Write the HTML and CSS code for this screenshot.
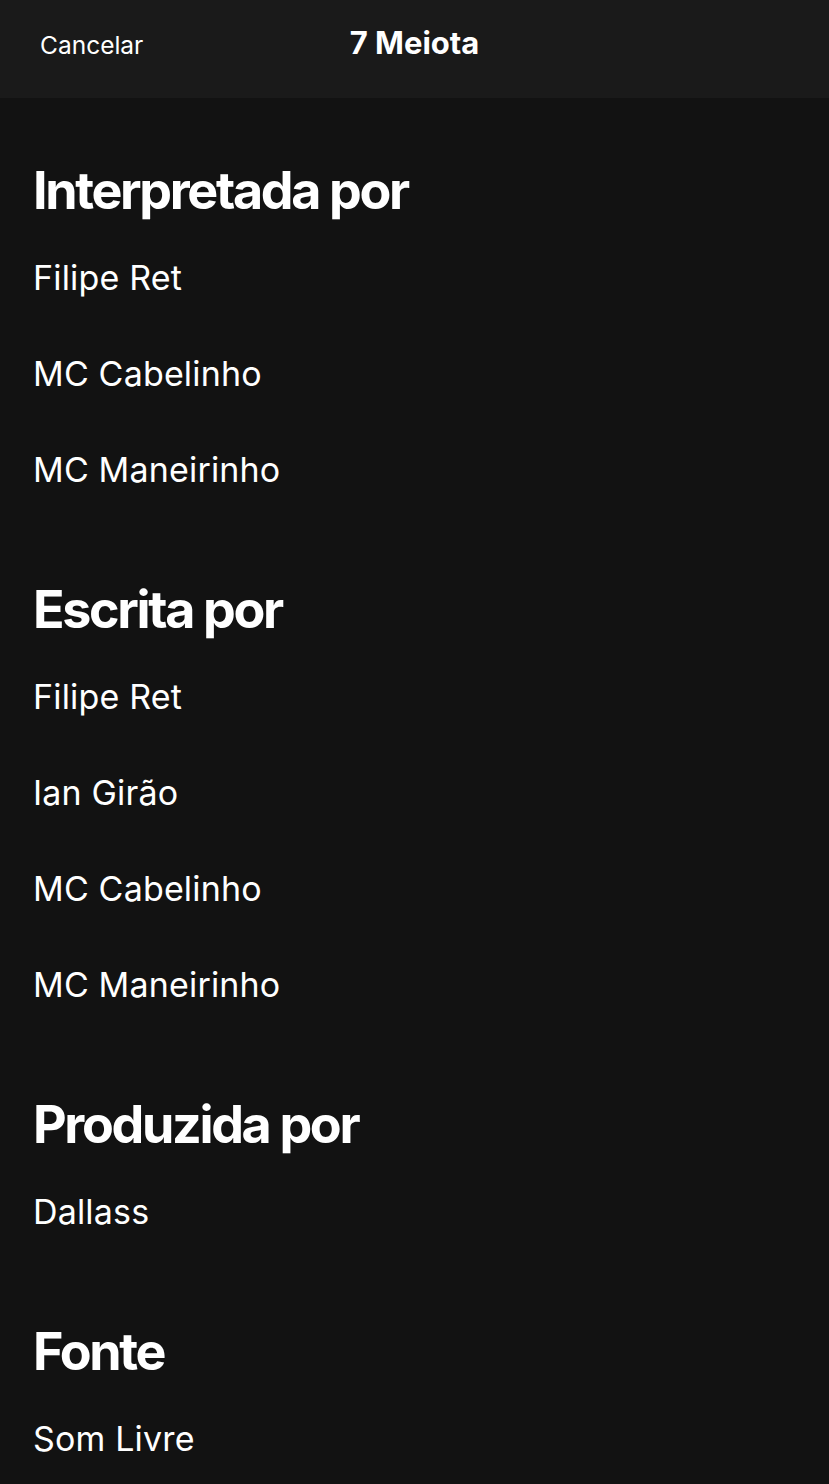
FILE: index.html
```html
<!DOCTYPE html>
<html lang="pt">
  <head>
    <meta charset="UTF-8" />
    <meta name="viewport" content="width=device-width, initial-scale=1.0" />
    <title>7 Meiota - Créditos</title>
    <link rel="stylesheet" href="styles.css">
  </head>
  <body>
    <header class="topbar">
      <button class="cancel">Cancelar</button>
      <h1 class="title">7 Meiota</h1>
      <span></span>
    </header>

    <main class="credits">
      <section class="group">
        <h2>Interpretada por</h2>
        <ul>
          <li>Filipe Ret</li>
          <li>MC Cabelinho</li>
          <li>MC Maneirinho</li>
        </ul>
      </section>

      <section class="group">
        <h2>Escrita por</h2>
        <ul>
          <li>Filipe Ret</li>
          <li>Ian Girão</li>
          <li>MC Cabelinho</li>
          <li>MC Maneirinho</li>
        </ul>
      </section>

      <section class="group">
        <h2>Produzida por</h2>
        <ul>
          <li>Dallass</li>
        </ul>
      </section>

      <section class="group">
        <h2>Fonte</h2>
        <ul>
          <li>Som Livre</li>
        </ul>
      </section>
    </main>
  </body>
</html>
```

FILE: styles.css
```css
/* Global */
body {
  margin: 0;
  background: #121212;
  color: #ffffff;
  font-family: "Inter", "Noto Sans", sans-serif;
}

/* Top bar */
.topbar {
  display: grid;
  grid-template-columns: 1fr auto 1fr;
  align-items: baseline;
  height: 98px;
  box-sizing: border-box;
  padding: 28px 40px 0;
  background: #1a1a1a;
}
.cancel {
  justify-self: start;
  padding: 0;
  background: none;
  border: none;
  color: #ffffff;
  font-family: inherit;
  font-size: 24.5px;
  line-height: 30px;
  cursor: pointer;
}
.title {
  margin: 0;
  font-size: 31px;
  font-weight: 700;
  line-height: 30px;
}

/* Credits list */
.credits {
  padding: 62px 33px 0;
}
.group {
  margin-bottom: 61px;
}
.group h2 {
  margin: 0 0 8px;
  font-size: 52px;
  font-weight: 700;
  line-height: 62px;
  letter-spacing: -0.045em;
}
.group ul {
  list-style: none;
  margin: 0;
  padding: 0;
}
.group li {
  font-size: 34px;
  line-height: 96px;
  letter-spacing: 0.005em;
}
```
